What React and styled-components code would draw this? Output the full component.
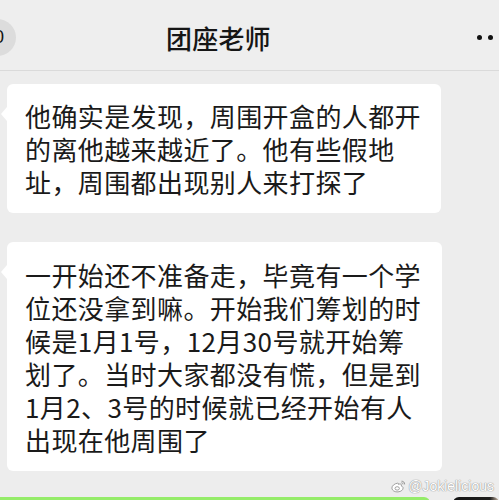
import React from "react";
import styled, { createGlobalStyle } from "styled-components";

const Global = createGlobalStyle`
  html, body { margin: 0; padding: 0; background: #ededed; }
  body { width: 499px; height: 500px; overflow: hidden; }
  #root { width: 499px; height: 500px; }
`;

const Screen = styled.div`
  position: relative;
  width: 499px;
  height: 500px;
  overflow: hidden;
  background: #ededed;
  display: flex;
  flex-direction: column;
  font-family: "Noto Sans CJK SC", "Noto Sans", sans-serif;
  color: #191919;
`;

const Header = styled.div`
  flex: 0 0 auto;
  height: 71px;
  box-sizing: border-box;
  border-bottom: 1px solid #dadada;
  background: #eeeeee;
  display: flex;
  align-items: center;
`;

const BackBadge = styled.div`
  flex: 0 0 auto;
  width: 37px;
  height: 37px;
  margin-left: -21px;
  margin-top: 4px;
  border-radius: 50%;
  background: #dcdcdc;
  display: flex;
  align-items: center;
  justify-content: flex-end;
  box-sizing: border-box;
  padding-right: 12px;
  font-family: "Liberation Sans", sans-serif;
  font-size: 18px;
  color: #111;
`;

const Title = styled.div`
  margin-left: 150px;
  margin-top: 4px;
  font-size: 26px;
  font-weight: 500;
  letter-spacing: 0.2px;
  color: #161616;
`;

const Spacer = styled.div`
  flex: 1;
`;

const Dots = styled.div`
  display: flex;
  gap: 6px;
  margin-right: 6px;
  margin-top: 4px;
`;

const Dot = styled.span`
  width: 5px;
  height: 5px;
  border-radius: 50%;
  background: #111;
`;

const Chat = styled.div`
  flex: 0 0 auto;
  display: flex;
  flex-direction: column;
  padding-top: 13px;
`;

const Messages = styled.div`
  display: flex;
  flex-direction: column;
  gap: 29px;
`;

const Bubble = styled.div`
  position: relative;
  margin-left: 7px;
  width: ${(p) => p.$w}px;
  box-sizing: border-box;
  background: #ffffff;
  border-radius: 6px;
  padding: ${(p) => p.$pt}px 10px 15px 18px;
  font-size: 26px;
  line-height: 33px;
  letter-spacing: 0.4px;
  white-space: nowrap;
  color: #1a1a1a;

  &::before {
    content: "";
    position: absolute;
    left: -6px;
    top: 23px;
    width: 0;
    height: 0;
    border-top: 7px solid transparent;
    border-bottom: 7px solid transparent;
    border-right: 6px solid #ffffff;
  }
`;

const Line = styled.div``;

const Digits = styled.span`
  letter-spacing: 1.2px;
`;

const BottomRow = styled.div`
  display: flex;
  gap: 23px;
  margin-top: 26px;
`;

const GreenBubble = styled.div`
  width: 430px;
  height: 40px;
  flex: 0 0 auto;
  background: #95ec69;
  border-radius: 0 6px 0 0;
`;

const Avatar = styled.div`
  width: 46px;
  height: 46px;
  flex: 0 0 auto;
  border-radius: 6px;
  background: linear-gradient(90deg, #141414 0%, #1d1d1d 80%, #cdb9a6 100%);
`;

const Watermark = styled.div`
  position: absolute;
  right: 5px;
  bottom: 6px;
  display: flex;
  align-items: center;
  gap: 2px;
  font-family: "Liberation Sans", "DejaVu Sans", sans-serif;
  font-size: 14px;
  color: #ffffff;
  text-shadow: 0 0 1px #8c8c8c, 0 0 1px #8c8c8c;
`;

const first = [
  "他确实是发现，周围开盒的人都开",
  "的离他越来越近了。他有些假地",
  "址，周围都出现别人来打探了",
];

const second = [
  "一开始还不准备走，毕竟有一个学",
  "位还没拿到嘛。开始我们筹划的时",
  "候是1月1号，12月30号就开始筹",
  "划了。当时大家都没有慌，但是到",
  "1月2、3号的时候就已经开始有人",
  "出现在他周围了",
];

function WeiboLogo() {
  return (
    <svg width="15" height="13" viewBox="0 0 15 13">
      <path
        d="M6.5 3.2C3.5 3.6 0.8 5.8 0.9 8.2 1 10.6 3.9 12.2 7 11.9 10.2 11.6 12.3 9.8 12.1 7.8 11.9 6.6 10.9 6.2 10.2 6 10.6 5.1 10.5 4.4 9.9 4.1 9.1 3.8 8 4.1 7.4 4.4 7.7 3.4 7.3 3.1 6.5 3.2Z"
        fill="#fff"
        stroke="#8a8a8a"
        strokeWidth="0.8"
      />
      <ellipse cx="6.2" cy="8.4" rx="2.2" ry="1.7" fill="none" stroke="#8a8a8a" strokeWidth="0.8" />
      <path d="M10.5 1.2C12.4 1.1 13.8 2.5 13.6 4.4" fill="none" stroke="#8a8a8a" strokeWidth="0.9" />
      <path d="M10.4 2.8C11.4 2.8 12.1 3.4 12 4.3" fill="none" stroke="#8a8a8a" strokeWidth="0.9" />
    </svg>
  );
}

export default function App() {
  return (
    <>
      <Global />
      <Screen>
        <Header>
          <BackBadge>0</BackBadge>
          <Title>团座老师</Title>
          <Spacer />
          <Dots>
            <Dot />
            <Dot />
          </Dots>
        </Header>
        <Chat>
          <Messages>
            <Bubble $w={434} $pt={15}>
              {first.map((t) => (
                <Line key={t}>{t}</Line>
              ))}
            </Bubble>
            <Bubble $w={435} $pt={16}>
              {second.map((t) => (
                <Line key={t}>{t}</Line>
              ))}
            </Bubble>
          </Messages>
          <BottomRow>
            <GreenBubble />
            <Avatar />
          </BottomRow>
        </Chat>
        <Watermark>
          <WeiboLogo />
          <span>@Jokielicious</span>
        </Watermark>
      </Screen>
    </>
  );
}
